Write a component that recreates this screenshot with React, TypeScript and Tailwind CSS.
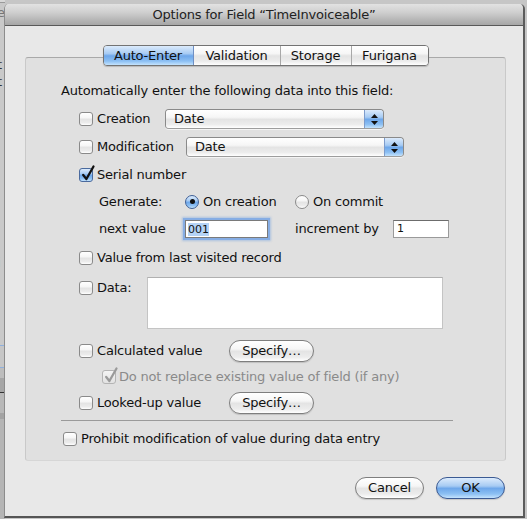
import React from "react";

const aquaWhite =
  "bg-[linear-gradient(to_bottom,#ffffff_0%,#f6f6f6_40%,#e4e4e4_52%,#ececec_80%,#ffffff_100%)]";
const aquaBlue =
  "bg-[linear-gradient(to_bottom,#dcebfc_0%,#a7cbf3_40%,#6ea7ea_52%,#8dc0f3_80%,#c4e3fd_100%)]";

function Check(props: { checked?: boolean; disabled?: boolean }) {
  const box = props.checked && !props.disabled
    ? `${aquaBlue} border-[#4a6a9e]`
    : props.disabled
    ? "bg-[linear-gradient(to_bottom,#f4f4f4,#e2e2e2)] border-[#b4b4b4]"
    : `${aquaWhite} border-[#8a8a8a]`;
  return (
    <span className={`relative inline-block w-[14px] h-[14px] shrink-0 rounded-[3px] border ${box}`}>
      {props.checked && (
        <svg className="absolute -top-[4px] left-[1px] overflow-visible" width="14" height="17" viewBox="0 0 14 17">
          <path d="M2.2 10 L5.4 14 L12.5 1.5" fill="none" stroke={props.disabled ? "#9a9a9a" : "#111"}
                strokeWidth="2.3" strokeLinecap="round" strokeLinejoin="round" />
        </svg>
      )}
    </span>
  );
}

function Radio(props: { on?: boolean }) {
  return (
    <span className={`relative inline-flex items-center justify-center w-[14px] h-[14px] shrink-0 rounded-full border ${props.on ? `${aquaBlue} border-[#3e5f96]` : `${aquaWhite} border-[#8a8a8a]`}`}>
      {props.on && <span className="w-[5px] h-[5px] rounded-full bg-[#111]" />}
    </span>
  );
}

function Popup(props: { width: string }) {
  return (
    <div className={`${props.width} h-[20px] flex rounded-[4px] border border-[#8a8a8a] border-b-[#9d9d9d] overflow-hidden shadow-[0_1px_0_#f4f4f4]`}>
      <div className={`flex-1 flex items-center pl-[8px] ${aquaWhite}`}>Date</div>
      <div className={`w-[19px] flex flex-col items-center justify-center gap-[3px] border-l border-[#7d9ccc] ${aquaBlue}`}>
        <svg width="7" height="4" viewBox="0 0 7 4"><path d="M3.5 0 L7 4 L0 4 Z" fill="#111" /></svg>
        <svg width="7" height="4" viewBox="0 0 7 4"><path d="M0 0 L7 0 L3.5 4 Z" fill="#111" /></svg>
      </div>
    </div>
  );
}

function PillButton(props: { label: string; blue?: boolean; width: string }) {
  return (
    <button className={`${props.width} h-[22px] rounded-full border flex items-center justify-center text-[#111] ${props.blue ? `${aquaBlue} border-[#3b5a93]` : `${aquaWhite} border-[#7e7e7e]`} shadow-[0_1px_1px_rgba(0,0,0,0.15)]`}>
      {props.label}
    </button>
  );
}

function Tab(props: { label: string; width: string; selected?: boolean; last?: boolean }) {
  return (
    <div className={`${props.width} h-full flex items-center justify-center ${props.selected ? aquaBlue : aquaWhite} ${props.last ? "" : "border-r border-[#a8a8a8]"} ${props.selected ? "border-r-[#6f8fc4]" : ""}`}>
      {props.label}
    </div>
  );
}

// strip of the window behind the sheet, only its left edge shows
function BehindWindow() {
  return (
    <div className="absolute inset-y-0 left-0 w-[5px] flex flex-col text-[13px] text-[#333] overflow-hidden">
      <div className="h-[3px] bg-[#d8d8d8] border-b border-[#9a9a9a]" />
      <div className="h-[342px] bg-[#c9c9c9] flex flex-col pl-[0px] -ml-[3px]">
        <span className="mt-[2px] leading-[16px] text-[#777]">e</span>
        <span className="mt-[36px] leading-[16px]">t</span>
        <span className="leading-[18px]">t</span>
        <span className="mt-[164px] leading-[16px]">i</span>
        <span className="mt-[70px] leading-[16px]">a</span>
      </div>
      <div className="h-px bg-[#8fb0dd]" />
      <div className="h-[21px] bg-[#c6c6c6]" />
      <div className="h-px bg-[#8fb0dd]" />
      <div className="h-[10px] bg-[#bdbdbd]" />
      <div className="h-[14px] bg-[#a6a6a6]" />
      <div className="h-px bg-[#333]" />
      <div className="h-[20px] bg-[#b8b8b8]" />
      <div className="h-[6px] bg-[#a3a3a3]" />
      <div className="flex-1 bg-[#b5b5b5]" />
    </div>
  );
}

export default function App() {
  return (
    <div className="relative w-[527px] h-[519px] overflow-hidden bg-[#c6c6c6] pt-[4px] pl-[4px] font-['DejaVu_Sans',sans-serif] text-[13px] tracking-[-0.2px] text-[#111]">
      <BehindWindow />
      <div className="relative w-[521px] h-[514px] flex flex-col bg-[#e8e8e8] border-l border-[#8c8c8c] border-r-2 border-r-[#5c5c5c] border-b-2 border-b-[#555] rounded-t-[5px] overflow-hidden">
        <div className="h-[22px] shrink-0 flex items-center justify-center border-b border-[#595959] bg-[linear-gradient(to_bottom,#e2e2e2_0%,#cfcfcf_40%,#b3b3b3_80%,#a7a7a7_100%)] text-[#222]">
          Options for Field “TimeInvoiceable”
        </div>

        <div className="flex-1 flex flex-col pt-[19px] pl-[20px] pr-[17px]">
          <div className="relative z-10 flex justify-center h-[21px]">
            <div className="flex h-[21px] rounded-[4px] border border-[#737373] overflow-hidden shadow-[0_1px_1px_rgba(0,0,0,0.18)]">
              <Tab label="Auto-Enter" width="w-[90px]" selected />
              <Tab label="Validation" width="w-[87px]" />
              <Tab label="Storage" width="w-[71px]" />
              <Tab label="Furigana" width="w-[76px]" last />
            </div>
          </div>

          <div className="-mt-[9px] h-[404px] flex flex-col rounded-[3px] border border-[#c9c9c9] border-t-[#a9a9a9] border-b-[#d6d6d6] bg-[#e0e0e0] pt-[23px] pl-[35px]">
            <div className="h-[20px] flex items-center">Automatically enter the following data into this field:</div>

            <div className="mt-[4px] h-[28px] flex items-center pl-[18px]">
              <Check />
              <span className="ml-[4px] w-[68px]">Creation</span>
              <Popup width="w-[219px]" />
            </div>
            <div className="h-[28px] flex items-center pl-[18px]">
              <Check />
              <span className="ml-[4px] w-[89px]">Modification</span>
              <Popup width="w-[218px]" />
            </div>
            <div className="h-[28px] flex items-center pl-[18px]">
              <Check checked />
              <span className="ml-[4px]">Serial number</span>
            </div>
            <div className="h-[25px] flex items-center pl-[38px]">
              <span className="w-[86px]">Generate:</span>
              <Radio on />
              <span className="ml-[4px] w-[92px]">On creation</span>
              <Radio />
              <span className="ml-[4px]">On commit</span>
            </div>
            <div className="h-[30px] flex items-center pl-[38px]">
              <span className="w-[86px]">next value</span>
              <div className="w-[83px] h-[18px] flex items-center bg-white border border-[#7a7a7a] shadow-[0_0_0_2px_#86ade4,0_0_2px_3px_rgba(110,160,225,0.45)] text-[11px] tracking-normal pl-[2px]">
                <span className="bg-[#b5d3f6] leading-[13px]">001</span>
              </div>
              <span className="ml-[27px] w-[98px]">increment by</span>
              <div className="w-[56px] h-[18px] flex items-center bg-white border border-[#9a9a9a] border-t-[#6c6c6c] text-[11px] tracking-normal pl-[3px]">
                1
              </div>
            </div>
            <div className="h-[28px] flex items-center pl-[18px]">
              <Check />
              <span className="ml-[4px]">Value from last visited record</span>
            </div>
            <div className="mt-[5px] h-[52px] flex items-start pl-[18px]">
              <div className="mt-[1px] flex items-center">
                <Check />
                <span className="ml-[4px] w-[50px]">Data:</span>
              </div>
              <div className="w-[296px] h-[52px] bg-white border border-[#c4c4c4] border-t-[#b0b0b0]" />
            </div>
            <div className="mt-[8px] h-[28px] flex items-center pl-[18px]">
              <Check />
              <span className="ml-[4px] w-[132px]">Calculated value</span>
              <PillButton label="Specify…" width="w-[85px]" />
            </div>
            <div className="h-[24px] flex items-center pl-[41px] text-[#8a8a8a]">
              <Check checked disabled />
              <span className="ml-[3px]">Do not replace existing value of field (if any)</span>
            </div>
            <div className="h-[27px] flex items-center pl-[18px]">
              <Check />
              <span className="ml-[4px] w-[132px]">Looked-up value</span>
              <PillButton label="Specify…" width="w-[85px]" />
            </div>
            <div className="mt-[4px] w-[392px] h-px bg-[#9a9a9a]" />
            <div className="mt-[6px] h-[24px] flex items-center pl-[2px]">
              <Check />
              <span className="ml-[4px]">Prohibit modification of value during data entry</span>
            </div>
          </div>

          <div className="mt-[16px] flex justify-end gap-[12px] pr-[1px]">
            <PillButton label="Cancel" width="w-[69px]" />
            <PillButton label="OK" width="w-[69px]" blue />
          </div>
        </div>
      </div>
    </div>
  );
}
